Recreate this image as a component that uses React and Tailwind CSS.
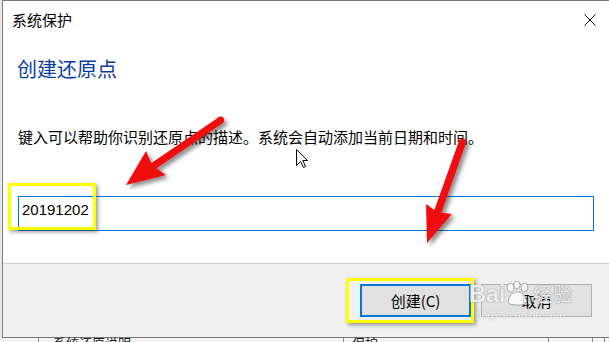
import React from 'react';

const cjk = { fontFamily: '"Microsoft YaHei", "Noto Sans CJK SC", "Noto Sans", sans-serif' };

function CloseIcon() {
  return (
    <svg width="12" height="12" viewBox="0 0 12 12" className="block">
      <path d="M0.5 0.5 L11.5 11.5 M11.5 0.5 L0.5 11.5" stroke="#000" strokeWidth="1" />
    </svg>
  );
}

function Cursor() {
  return (
    <svg width="13" height="20" viewBox="0 0 13 20" className="absolute left-[296px] top-[149px]">
      <path d="M0.5 0.5 L0.5 16.5 L4.5 12.5 L7.5 18.5 L9.5 17.5 L6.8 11.5 L11.5 11.5 Z" fill="#fff" stroke="#000" strokeWidth="1" strokeLinejoin="round" />
    </svg>
  );
}

function Arrows() {
  return (
    <svg width="609" height="342" viewBox="0 0 609 342" className="absolute left-0 top-0 pointer-events-none">
      <defs>
        <filter id="sh" x="-20%" y="-20%" width="140%" height="140%">
          <feDropShadow dx="3" dy="3" stdDeviation="2" floodColor="#000" floodOpacity="0.45" />
        </filter>
      </defs>
      <g filter="url(#sh)" fill="#f01010" stroke="none">
        {/* left arrow */}
        <path d="M219 117 L223 123 L154 170 L150 164 Z" />
        <circle cx="220.5" cy="120" r="3.6" />
        <path d="M126 185 L146 151 L152 165 L166 175 Z" />
        {/* right arrow */}
        <path d="M459 141 L466 143 L441 214 L434 211 Z" />
        <circle cx="462.5" cy="142" r="3.6" />
        <path d="M427 243 L426 204 L437 212 L452 214 Z" />
      </g>
    </svg>
  );
}

function Watermark() {
  return (
    <div className="absolute left-[469px] top-[281px] flex flex-col items-center whitespace-nowrap pointer-events-none">
      <div className="flex items-center leading-none text-white/85 [text-shadow:0_0_1px_#8a8a8a,0_0_1px_#8a8a8a]">
        <span className="text-[24px] font-bold tracking-[-0.5px]" style={{ fontFamily: '"Liberation Sans", Arial, sans-serif' }}>Bai</span>
        <svg width="28" height="26" viewBox="0 0 26 24" className="-ml-[1px] shrink-0">
          <g fill="#fff" fillOpacity="0.8" stroke="#9a9a9a" strokeWidth="0.8">
            <ellipse cx="6" cy="6" rx="3" ry="4" />
            <ellipse cx="12" cy="3.5" rx="3" ry="3.5" />
            <ellipse cx="19" cy="6" rx="3" ry="4" />
            <path d="M4 20 C4 13 9 10 12.5 10 C16 10 21 13 21 20 C21 23 4 23 4 20 Z" />
          </g>
        </svg>
        <span className="text-[20px] ml-[1px]" style={cjk}>经验</span>
      </div>
      <span className="text-[11px] leading-none mt-[2px] text-white/85 [text-shadow:0_0_1px_#999]" style={{ fontFamily: '"Liberation Sans", Arial, sans-serif' }}>jingyan.baidu.com</span>
    </div>
  );
}

export default function App() {
  return (
    <div className="relative w-[609px] h-[342px] overflow-hidden bg-[#e8e8e8]" style={cjk}>
      <div className="ml-[2px] w-[607px] h-[338px] flex flex-col bg-white border-l border-t border-b border-[#7a7a7a]">
        <div className="h-[37px] flex items-center justify-between pl-[9px] pr-[13px]">
          <span className="text-[15px] leading-[15px] text-black">系统保护</span>
          <CloseIcon />
        </div>

        <div className="flex-1 flex flex-col">
          <h1 className="mt-[21px] pl-[14px] text-[20px] leading-[20px] text-[#0a3ca0] font-normal">创建还原点</h1>
          <p className="mt-[50px] pl-[15px] text-[15px] leading-[15px] text-black whitespace-nowrap">
            键入可以帮助你识别还原点的描述。系统会自动添加当前日期和时间。
          </p>
          <div className="mt-[52px] ml-[15px] w-[576px] h-[35px] border border-[#0078d7] bg-white pl-[3px] pt-[5px]">
            <span className="block text-[15px] leading-[15px] text-black" style={{ fontFamily: '"Liberation Sans", Arial, sans-serif' }}>20191202</span>
          </div>
        </div>

        <div className="h-[74px] border-t border-[#cfcfcf] bg-[#f0f0f0] flex justify-end items-start gap-[10px] pt-[20px] pr-[17px]">
          <button className="w-[111px] h-[33px] border-2 border-[#0078d7] bg-[#e1e1e1] text-[15px] leading-[15px] text-black" style={cjk}>创建(C)</button>
          <button className="w-[111px] h-[33px] border border-[#adadad] bg-[#e1e1e1] text-[15px] leading-[15px] text-black" style={cjk}>取消</button>
        </div>
      </div>

      <div className="relative h-[4px] bg-[#f4f4f4]">
        <div className="absolute left-[38px] top-0 h-full w-px bg-[#8a8a8a]" />
        <div className="absolute left-[343px] top-0 h-full w-px bg-[#8a8a8a]" />
        <div className="absolute left-[548px] top-0 h-full w-px bg-[#8a8a8a]" />
        <div className="absolute left-[592px] top-0 h-full w-px bg-[#8a8a8a]" />
        <div className="absolute left-[604px] top-0 h-full w-px bg-[#8a8a8a]" />
        <span className="absolute left-[53px] -top-[2px] text-[13px] leading-[13px] text-[#222]">系统还原说明</span>
        <span className="absolute left-[352px] -top-[2px] text-[13px] leading-[13px] text-[#222]">保护</span>
      </div>

      <div className="absolute left-[8px] top-[183px] w-[88px] h-[47px] border-[3px] border-[#ffff00] shadow-[2px_2px_4px_rgba(0,0,0,0.4)] pointer-events-none" />
      <div className="absolute left-[346px] top-[278px] w-[128px] h-[45px] border-[3px] border-[#ffff00] shadow-[2px_2px_4px_rgba(0,0,0,0.4)] pointer-events-none" />

      <Watermark />
      <Arrows />
      <Cursor />
    </div>
  );
}
